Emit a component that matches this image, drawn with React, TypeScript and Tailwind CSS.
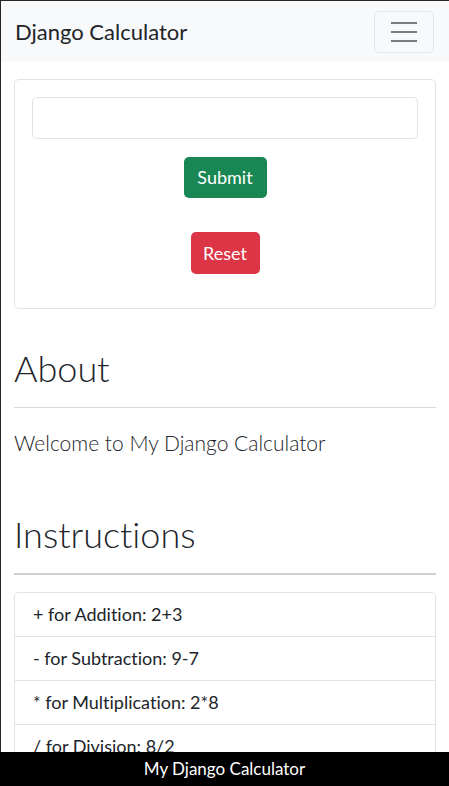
import { useState } from "react";

const ITEMS = [
  "+ for Addition: 2+3",
  "- for Subtraction: 9-7",
  "* for Multiplication: 2*8",
  "/ for Division: 8/2",
];

export default function App() {
  const [expr, setExpr] = useState("");

  return (
    <div className="min-h-screen border-l border-t border-[#262626] bg-white font-['Lato','Open_Sans',sans-serif] text-[#212529] [font-variant-ligatures:none]">
      <nav className="flex h-[61px] items-center justify-between bg-[#f8f9fa] pl-[14px] pr-[15px]">
        <span className="text-[22px] leading-none">Django Calculator</span>
        <button className="flex h-[42px] w-[60px] flex-col items-center justify-center gap-[7px] rounded-[5px] border border-[#e4e5e6]">
          <span className="h-[2px] w-[26px] bg-[#7a7b7c]" />
          <span className="h-[2px] w-[26px] bg-[#7a7b7c]" />
          <span className="h-[2px] w-[26px] bg-[#7a7b7c]" />
        </button>
      </nav>

      <main className="px-[13px]">
        <form
          className="mt-[17px] flex flex-col items-center rounded-[5px] border border-[#e1e4e7] px-[17px] pb-[34px] pt-[17px]"
          onSubmit={(e) => e.preventDefault()}
        >
          <input
            value={expr}
            onChange={(e) => setExpr(e.target.value)}
            className="h-[42px] w-full rounded-[5px] border border-[#dee2e6] px-3 text-[18px] outline-none"
          />
          <button
            type="submit"
            className="mt-[18px] h-[41px] w-[83px] rounded-[5px] bg-[#198754] text-[18px] text-white"
          >
            Submit
          </button>
          <button
            type="button"
            onClick={() => setExpr("")}
            className="mt-[34px] h-[42px] w-[69px] rounded-[5px] bg-[#dc3545] text-[18px] text-white"
          >
            Reset
          </button>
        </form>

        <h2 className="mt-[35px] h-[48px] text-[36px] font-light leading-[48px]">About</h2>
        <hr className="mt-[15px] border-0 border-t border-[#d9d9d9]" />
        <p className="mt-[18px] text-[21px] font-light leading-[33px]">
          Welcome to My Django Calculator
        </p>

        <h2 className="mt-[51px] h-[48px] text-[36px] font-light leading-[48px]">Instructions</h2>
        <hr className="mt-[15px] border-0 border-t-2 border-[#cfcfcf]" />

        <ul className="mt-[17px] rounded-t-[5px] border-x border-t border-[#e3e3e3]">
          {ITEMS.map((item) => (
            <li
              key={item}
              className="flex h-[44px] items-center border-b border-[#e3e3e3] px-[18px] text-[18px]"
            >
              {item}
            </li>
          ))}
        </ul>
      </main>

      <footer className="fixed bottom-0 left-0 flex h-[34px] w-full items-center justify-center bg-black text-[17px] text-white">
        My Django Calculator
      </footer>
    </div>
  );
}
